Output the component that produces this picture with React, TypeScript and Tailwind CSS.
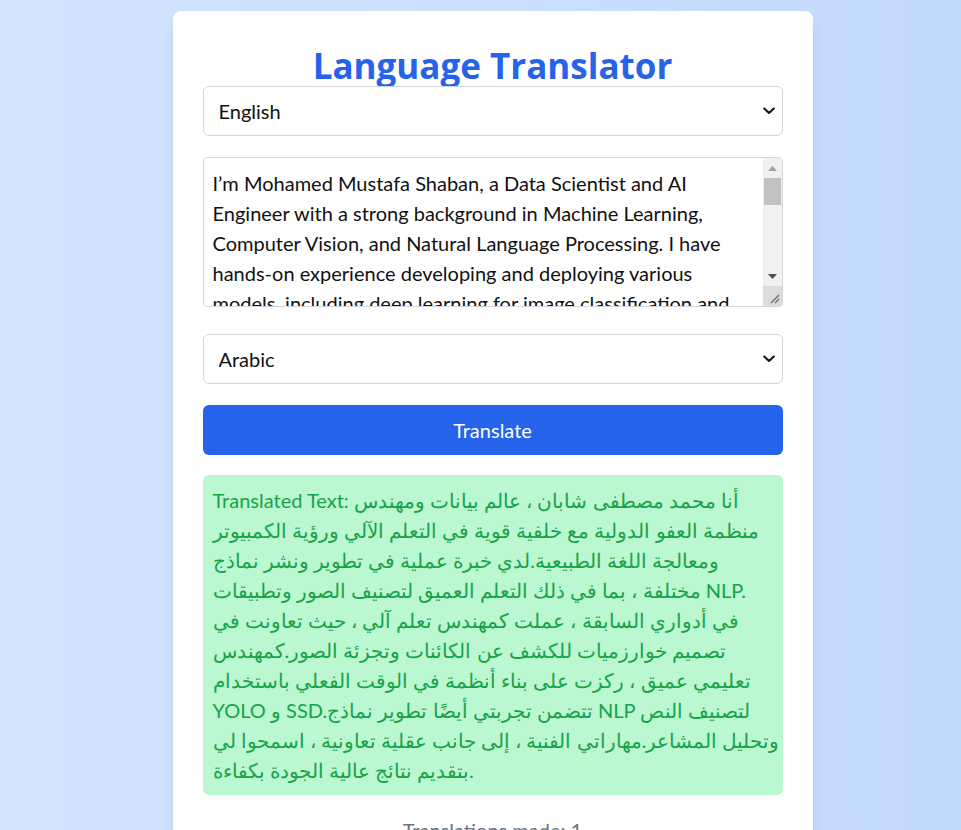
import React from "react";

const sourceText = [
  "I’m Mohamed Mustafa Shaban, a Data Scientist and AI",
  "Engineer with a strong background in Machine Learning,",
  "Computer Vision, and Natural Language Processing. I have",
  "hands-on experience developing and deploying various",
  "models, including deep learning for image classification and",
  "NLP applications. In my previous roles, I worked as a",
  "Machine Learning Engineer, where I collaborated on designing",
  "algorithms for object detection and image segmentation.",
].join("\n");

const translatedLines = [
  "أنا محمد مصطفى شابان ، عالم بيانات ومهندس",
  "منظمة العفو الدولية مع خلفية قوية في التعلم الآلي ورؤية الكمبيوتر",
  "ومعالجة اللغة الطبيعية.لدي خبرة عملية في تطوير ونشر نماذج",
  "مختلفة ، بما في ذلك التعلم العميق لتصنيف الصور وتطبيقات NLP.",
  "في أدواري السابقة ، عملت كمهندس تعلم آلي ، حيث تعاونت في",
  "تصميم خوارزميات للكشف عن الكائنات وتجزئة الصور.كمهندس",
  "تعليمي عميق ، ركزت على بناء أنظمة في الوقت الفعلي باستخدام",
  "YOLO و SSD.تتضمن تجربتي أيضًا تطوير نماذج NLP لتصنيف النص",
  "وتحليل المشاعر.مهاراتي الفنية ، إلى جانب عقلية تعاونية ، اسمحوا لي",
  "بتقديم نتائج عالية الجودة بكفاءة.",
];

function Chevron() {
  return (
    <svg
      className="pointer-events-none absolute right-[8px] top-1/2 -translate-y-1/2"
      width="12"
      height="8"
      viewBox="0 0 12 8"
      fill="none"
    >
      <path d="M1.2 1.5 L6 6 L10.8 1.5" stroke="#111" strokeWidth="2" strokeLinecap="round" strokeLinejoin="round" />
    </svg>
  );
}

function LangSelect({ value, options }: { value: string; options: string[] }) {
  return (
    <div className="relative">
      <select
        defaultValue={value}
        className="block h-[50px] w-full appearance-none rounded-md border border-[#d1d5db] bg-white pl-[15px] pr-8 font-['Lato',sans-serif] text-[20px] text-[#111111] outline-none"
      >
        {options.map((o) => (
          <option key={o} value={o}>
            {o}
          </option>
        ))}
      </select>
      <Chevron />
    </div>
  );
}

function FakeScrollbar() {
  return (
    <div className="pointer-events-none absolute right-[1px] top-[1px] bottom-[1px] flex w-[19px] flex-col bg-[#f1f1f1]">
      <div className="flex h-[20px] items-center justify-center">
        <svg width="9" height="5" viewBox="0 0 9 5">
          <path d="M0 5 L4.5 0 L9 5 Z" fill="#a3a3a3" />
        </svg>
      </div>
      <div className="mx-[1px] h-[27px] bg-[#c1c1c1]" />
      <div className="flex-1" />
      <div className="flex h-[20px] items-center justify-center">
        <svg width="9" height="5" viewBox="0 0 9 5">
          <path d="M0 0 L4.5 5 L9 0 Z" fill="#505050" />
        </svg>
      </div>
      <div className="relative h-[20px] bg-[#dcdcdc]">
        <svg className="absolute bottom-[2px] right-[2px]" width="11" height="11" viewBox="0 0 11 11">
          <path d="M10 2 L2 10 M10 6 L6 10" stroke="#6b6b6b" strokeWidth="1.3" />
        </svg>
      </div>
    </div>
  );
}

export default function App() {
  const languages = ["English", "Arabic", "French", "German", "Spanish"];
  return (
    <div className="flex min-h-screen justify-center bg-linear-to-r from-[#d3e4fd] to-[#c3d9fc] pl-[24px] font-['Lato',sans-serif]">
      <div className="mt-[11px] mb-[11px] flex w-[640px] flex-col self-start rounded-lg bg-white px-[30px] pt-[35px] pb-[30px] shadow-lg">
        <h1 className="h-[40px] text-center font-['Open_Sans',sans-serif] text-[35px] font-bold leading-[40px] text-[#2563eb]">
          Language Translator
        </h1>

        <LangSelect value="English" options={languages} />

        <div className="relative mt-[21px] h-[150px]">
          <textarea
            defaultValue={sourceText}
            wrap="off"
            readOnly
            className="block h-full w-full resize-none overflow-hidden rounded-[4px] border border-[#d1d5db] bg-white pt-[10px] pl-[9px] pr-[30px] font-['Lato',sans-serif] text-[20px] leading-[30px] text-[#111111] outline-none"
          />
          <FakeScrollbar />
        </div>

        <div className="mt-[27px]">
          <LangSelect value="Arabic" options={languages} />
        </div>

        <button className="mt-[21px] h-[50px] w-full rounded-md bg-[#2563eb] text-center font-['Lato',sans-serif] text-[20px] text-white">
          Translate
        </button>

        <div
          dir="ltr"
          className="mt-[20px] whitespace-nowrap rounded-md bg-[#bbf7d0] px-[10px] py-[10px] text-[20px] leading-[30px] text-[#16a34a]"
        >
          {translatedLines.map((line, i) => (
            <React.Fragment key={i}>
              {i === 0 ? "Translated Text: " : ""}
              {line}
              {i < translatedLines.length - 1 ? <br /> : null}
            </React.Fragment>
          ))}
        </div>

        <p className="mt-[20px] text-center text-[20px] leading-[30px] text-[#6b7280]">Translations made: 1</p>
      </div>
    </div>
  );
}
